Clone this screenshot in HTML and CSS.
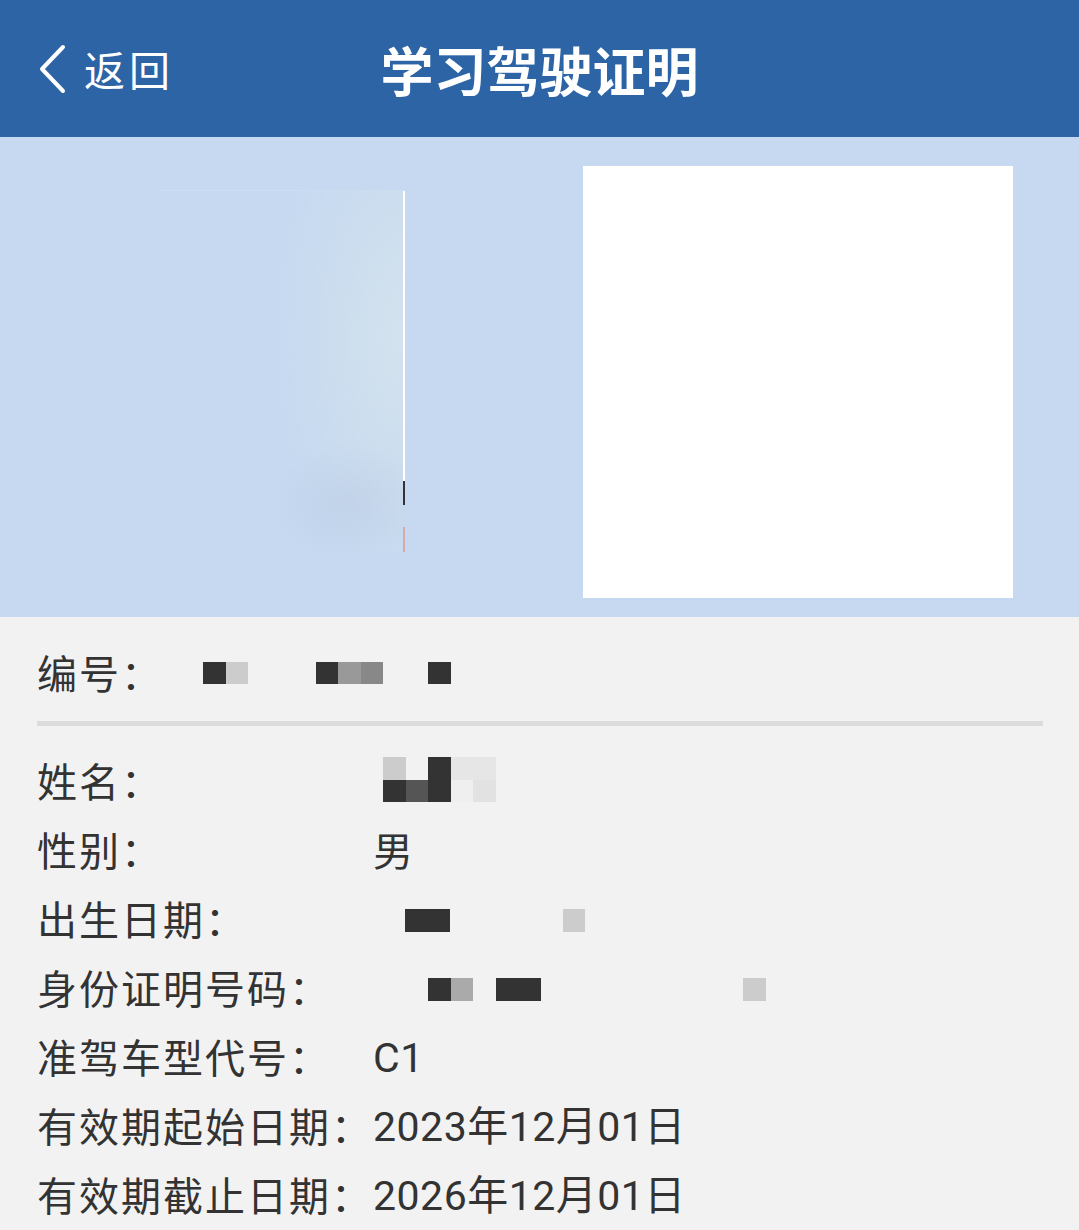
FILE: index.html
```html
<!DOCTYPE html>
<html lang="zh-CN">
<head>
<meta charset="utf-8">
<title>学习驾驶证明</title>
<link rel="stylesheet" href="styles.css">
</head>
<body>
<header class="topbar">
  <a class="back">
    <svg class="chev" viewBox="0 0 30 50" width="30" height="50"><path d="M26 3 L5 25 L26 47" fill="none" stroke="#fff" stroke-width="4" stroke-linecap="round" stroke-linejoin="round"/></svg>
    <span>返回</span>
  </a>
  <h1 class="title">学习驾驶证明</h1>
  <div class="spacer"></div>
</header>

<section class="photos">
  <div class="photo-faded">
    <div class="edge">
      <span class="edge-line"></span>
      <span class="edge-dark"></span>
      <span class="edge-gap"></span>
      <span class="edge-red"></span>
    </div>
  </div>
  <div class="photo-white"></div>
</section>

<section class="info">
  <div class="row first">
    <span class="label">编号：</span>
    <span class="pix num">
      <i class="px d"></i><i class="px l"></i><i class="px"></i><i class="px"></i><i class="px"></i><i class="px d"></i><i class="px g"></i><i class="px g2"></i><i class="px"></i><i class="px"></i><i class="px d"></i>
    </span>
  </div>
  <div class="divider"></div>
  <div class="row">
    <span class="label">姓名：</span>
    <span class="pix name">
      <span class="pixline"><i class="px l"></i><i class="px"></i><i class="px d"></i><i class="px f1"></i><i class="px f1"></i></span>
      <span class="pixline"><i class="px d"></i><i class="px m"></i><i class="px d"></i><i class="px f0"></i><i class="px f2"></i></span>
    </span>
  </div>
  <div class="row">
    <span class="label">性别：</span>
    <span class="value cjk">男</span>
  </div>
  <div class="row">
    <span class="label">出生日期：</span>
    <span class="pix birth">
      <i class="px d"></i><i class="px d"></i><i class="px"></i><i class="px"></i><i class="px"></i><i class="px"></i><i class="px"></i><i class="px l"></i>
    </span>
  </div>
  <div class="row">
    <span class="label">身份证明号码：</span>
    <span class="pix idno">
      <i class="px d"></i><i class="px a"></i><i class="px"></i><i class="px d"></i><i class="px d"></i><i class="px"></i><i class="px"></i><i class="px"></i><i class="px"></i><i class="px"></i><i class="px"></i><i class="px"></i><i class="px"></i><i class="px"></i><i class="px l"></i>
    </span>
  </div>
  <div class="row">
    <span class="label">准驾车型代号：</span>
    <span class="value">C1</span>
  </div>
  <div class="row">
    <span class="label">有效期起始日期：</span>
    <span class="value">2023年12月01日</span>
  </div>
  <div class="row">
    <span class="label">有效期截止日期：</span>
    <span class="value">2026年12月01日</span>
  </div>
</section>
</body>
</html>
```

FILE: styles.css
```css
* { box-sizing: border-box; }
html, body {
  margin: 0;
  padding: 0;
  background: #f2f2f2;
  font-family: "Noto Sans CJK SC", "Noto Sans", sans-serif;
  color: #333;
}
body { width: 1079px; height: 1230px; overflow: hidden; }

.topbar {
  height: 137px;
  background: #2c64a6;
  display: grid;
  grid-template-columns: 1fr auto 1fr;
  align-items: center;
  color: #fff;
}
.back {
  display: flex;
  align-items: center;
  gap: 17px;
  padding-left: 37px;
  font-size: 41px;
  letter-spacing: 4px;
  line-height: 1;
}
.chev { display: block; }
.title {
  margin: 0;
  font-size: 53px;
  font-weight: 700;
  line-height: 1;
  margin-top: 2px;
}

.photos {
  height: 480px;
  background: #c6d9f0;
  display: flex;
  align-items: flex-start;
  padding-left: 160px;
  gap: 178px;
}
.photo-faded {
  width: 245px;
  height: 363px;
  margin-top: 53px;
  background:
    radial-gradient(ellipse 80px 60px at 78% 86%, rgba(180,196,222,0.35), rgba(180,196,222,0) 100%),
    radial-gradient(ellipse 130px 260px at 100% 40%, rgba(212,227,237,0.9), rgba(212,227,237,0) 100%);
  border-top: 1px solid rgba(205,228,242,0.5);
  display: flex;
  justify-content: flex-end;
}
.edge {
  width: 2px;
  height: 100%;
  display: flex;
  flex-direction: column;
}
.edge-line { height: 290px; background: #fff; }
.edge-dark { height: 24px; background: #333; }
.edge-gap { height: 22px; }
.edge-red { height: 25px; background: #d9a8a8; }
.photo-white {
  width: 430px;
  height: 432px;
  margin-top: 29px;
  background: #fff;
}

.info {
  padding: 20px 36px 0 37px;
}
.row {
  height: 69px;
  display: flex;
  align-items: center;
  font-size: 40px;
  line-height: 1;
}
.label {
  width: 336px;
  flex: none;
  white-space: nowrap;
  letter-spacing: 2px;
}
.value {
  white-space: nowrap;
  font-family: Roboto, "Noto Sans CJK SC", sans-serif;
  font-size: 41px;
  letter-spacing: 0.5px;
  padding-top: 5px;
}
.value.cjk { font-family: "Noto Sans CJK SC", sans-serif; font-size: 40px; padding-top: 0; }
.row.first .label { width: 166px; }
.divider {
  height: 5px;
  background: #dcdcdc;
  margin: 15px 0 19px;
}

.pix { display: flex; }
.name { flex-direction: column; margin-left: 10px; }
.pixline { display: flex; }
.px {
  display: block;
  width: 22.5px;
  height: 22.5px;
}
.px.d { background: #333; }
.px.l { background: #cccccc; }
.px.g { background: #999; }
.px.g2 { background: #888; }
.px.m { background: #555; }
.px.a { background: #aaa; }
.px.f0 { background: #efefef; }
.px.f1 { background: #e6e6e6; }
.px.f2 { background: #e2e2e2; }
.num { margin-top: 3px; }
.birth { margin-left: 32px; margin-top: 6px; }
.idno { margin-left: 55px; margin-top: 6px; }
```
